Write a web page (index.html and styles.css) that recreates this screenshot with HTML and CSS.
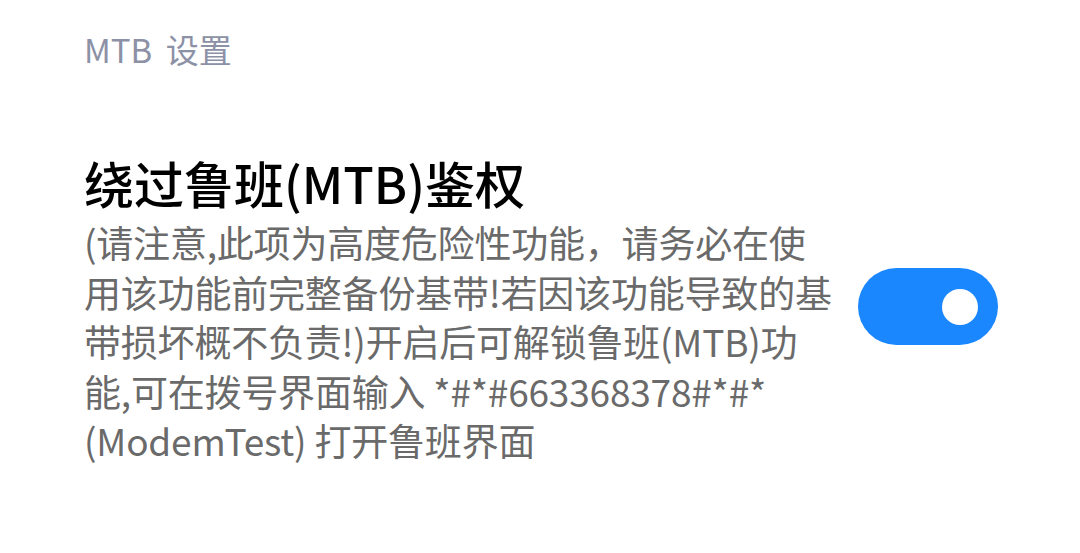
FILE: index.html
```html
<!DOCTYPE html>
<html lang="zh-CN">
<head>
<meta charset="utf-8">
<link rel="stylesheet" href="styles.css">
</head>
<body>
<div class="page">
  <div class="section-title">MTB 设置</div>
  <div class="row">
    <div class="text">
      <div class="title">绕过鲁班(MTB)鉴权</div>
      <div class="desc">(请注意,此项为高度危险性功能，请务必在使<br>用该功能前完整备份基带!若因该功能导致的基<br>带损坏概不负责!)开启后可解锁鲁班(MTB)功<br>能,可在拨号界面输入 *#*#663368378#*#*<br>(ModemTest) 打开鲁班界面</div>
    </div>
    <div class="switch on"><div class="knob"></div></div>
  </div>
</div>
</body>
</html>
```
FILE: styles.css
```css
html, body {
  margin: 0;
  padding: 0;
  background: #ffffff;
}
body {
  font-family: "Noto Sans CJK SC", "Noto Sans", sans-serif;
  width: 1080px;
  height: 553px;
  overflow: hidden;
}
.page {
  padding: 29px 82px 0 84px;
}
.section-title {
  font-size: 33px;
  line-height: 40px;
  color: #8c91a6;
  word-spacing: 6px;
}
.row {
  margin-top: 83px;
  display: flex;
  align-items: center;
}
.text {
  flex: 1;
}
.title {
  font-size: 50px;
  line-height: 60px;
  font-weight: 500;
  color: #000000;
  margin-bottom: 6px;
}
.desc {
  font-size: 37px;
  line-height: 49.5px;
  color: #6a6a6a;
  white-space: nowrap;
  letter-spacing: -0.2px;
}
.switch {
  width: 140px;
  height: 77px;
  border-radius: 39px;
  background: #1a87ff;
  position: relative;
  flex-shrink: 0;
  margin-bottom: 4px;
}
.knob {
  position: absolute;
  width: 36px;
  height: 36px;
  border-radius: 50%;
  background: #ffffff;
  right: 20px;
  top: 20.5px;
}
```
